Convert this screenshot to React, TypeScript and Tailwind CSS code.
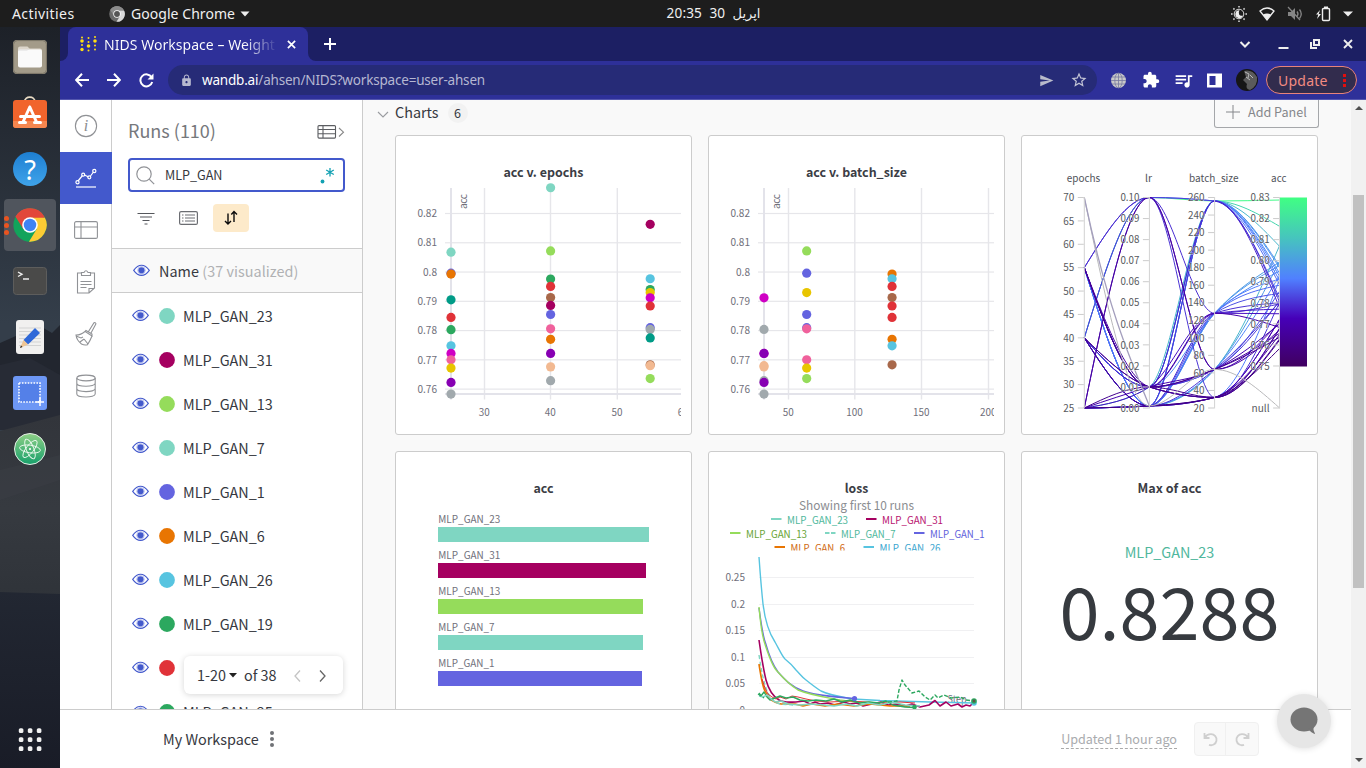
import React from "react";
import { MdLock, MdSend, MdStarBorder, MdExtension, MdQueueMusic } from "react-icons/md";

const C = {
  teal: "#7fd6c2", maroon: "#a50060", lime: "#95dc5b", blue: "#6464e0", orange: "#e87502",
  cyan: "#57c4e0", green: "#2ca85f", red: "#e03238", dteal: "#009b87", magenta: "#cf00c4",
  pink: "#f0619c", yellow: "#e8c500", purple: "#8700b3", gray: "#a1a9ad", brown: "#a8684a", peach: "#f2b991",
};

type Run = [string, number, number, number, number];

/* colour, epochs, batch size, accuracy, learning rate */
const RUNS: Run[] = [
  [C.teal, 25, 256, 0.8068, 0.01], [C.blue, 25, 64, 0.7996, 0.001], [C.orange, 25, 128, 0.7993, 0.001],
  [C.dteal, 25, 256, 0.7905, 0.001], [C.red, 25, 128, 0.7845, 0.001], [C.green, 25, 256, 0.7803, 0.001],
  [C.cyan, 25, 128, 0.7748, 0.01], [C.magenta, 25, 32, 0.7722, 0.001], [C.pink, 25, 64, 0.77, 0.01],
  [C.yellow, 25, 64, 0.7672, 0.1], [C.purple, 25, 32, 0.7623, 0.01], [C.gray, 25, 32, 0.7583, 0.001],
  [C.teal, 40, 256, 0.8288, 0.1], [C.lime, 40, 64, 0.8072, 0.001], [C.green, 40, 256, 0.7976, 0.01],
  [C.red, 40, 128, 0.7951, 0.01], [C.brown, 40, 128, 0.7913, 0.001], [C.maroon, 40, 256, 0.7886, 0.1],
  [C.blue, 40, 64, 0.7855, 0.01], [C.pink, 40, 64, 0.7806, 0.001], [C.orange, 40, 128, 0.777, 0.01],
  [C.purple, 40, 32, 0.7722, 0.001], [C.peach, 40, 32, 0.7676, 0.01], [C.gray, 40, 32, 0.7629, 0.01],
  [C.maroon, 55, 256, 0.8163, 0.01], [C.cyan, 55, 128, 0.7977, 0.001], [C.green, 55, 256, 0.794, 0.001],
  [C.yellow, 55, 64, 0.793, 0.001], [C.magenta, 55, 32, 0.7912, 0.001], [C.red, 55, 128, 0.7884, 0.001],
  [C.blue, 55, 64, 0.781, 0.01], [C.gray, 55, 32, 0.7804, 0.1], [C.dteal, 55, 256, 0.7775, 0.01],
  [C.brown, 55, 128, 0.7683, 0.01], [C.peach, 55, 32, 0.768, 0.01], [C.lime, 55, 64, 0.7636, 0.01],
];

function Eye() {
  return (
    <svg width="17" height="13" viewBox="0 0 17 13" className="-mt-[2px] shrink-0">
      <path d="M.7 6.3C3.2 2.8 5.7 1.2 8.5 1.2s5.3 1.6 7.8 5.1c-2.5 3.5-5 5.1-7.8 5.1S3.200 9.800.7 6.300z" fill="#fff" stroke="#4359cc" strokeWidth="1.15" />
      <circle cx="8.500" cy="6.300" r="3.800" fill="none" stroke="#8d9be2" strokeWidth=".6" />
      <circle cx="8.500" cy="6.300" r="3.100" fill="#4359cc" />
    </svg>
  );
}

function Card({ children }: { children: React.ReactNode }) {
  return <section className="h-[300px] w-[297px] overflow-hidden rounded-[3px] border border-[#ccc] bg-white">{children}</section>;
}

function T({ x, y, s = 10.2, a = "middle", f = "#70707b", len, w, children }: { x: number; y: number; s?: number; a?: "start" | "middle" | "end"; f?: string; len?: number; w?: number; children: React.ReactNode }) {
  return <text x={x} y={y} fontSize={s} textAnchor={a} fill={f} fontWeight={w} textLength={len} lengthAdjust="spacingAndGlyphs">{children}</text>;
}

function Scatter({ title, titleLen, ox, axis, axisMin, ticks, pick, px, clipX }: { title: string; titleLen: number; ox: number; axis: number; axisMin: number; ticks: [string, number][]; pick: 1 | 2; px: (v: number) => number; clipX: number }) {
  const y = (v: number) => 213.5 + (0.82 - v) * 2927;
  const id = "clip" + pick;
  return (
    <svg width="295" height="298" viewBox={`${ox} 136 295 298`}>
      <clipPath id={id}><rect x={ox} y="136" width={clipX - ox} height="298" /></clipPath>
      <T x={ox + 147.500} y={177} s={12.600} w={700} f="#3b3d45" len={titleLen}>{title}</T>
      <g clipPath={`url(#${id})`}>
        {[0.82, 0.81, 0.8, 0.79, 0.78, 0.77, 0.76].map((v) => (
          <g key={v}>
            <rect x={axisMin} y={y(v) - 0.6} width={clipX - axisMin} height="1.200" fill="#e6e6ea" />
            <T x={axis - 14} y={y(v) + 3.700} a="end" len={v === 0.8 ? 14 : 19.500}>{v}</T>
          </g>
        ))}
        {ticks.map(([l, tx]) => (
          <g key={l}>
            <rect x={tx - 0.7} y="188" width="1.400" height="211.500" fill="#e6e6ea" />
            <T x={tx - 0.2} y={416} len={l.length * 5.500}>{l}</T>
          </g>
        ))}
        <rect x={axis - 1} y="188" width="2" height="211.500" fill="#e3e3ea" />
        <rect x={axisMin} y="393" width={clipX - axisMin} height="2" fill="#e3e3ea" />
        <text transform={`translate(${axis + 16} 209) rotate(-90)`} fontSize="10.200" fill="#70707b" textLength="15">acc</text>
        {RUNS.filter((r) => pick === 1 || r[2] < 200).sort((p, q) => q[3] - p[3]).map((r, i) => (
          <circle key={i} cx={px(r[pick])} cy={y(r[3])} r="4.600" fill={r[0]} />
        ))}
      </g>
    </svg>
  );
}

function lerpColor(t: number) {
  const stops: [number, number[]][] = [[0, [64, 255, 131]], [0.24, [70, 196, 190]], [0.48, [80, 128, 255]], [0.715, [70, 0, 184]], [1, [64, 0, 96]]];
  for (let i = 1; i < stops.length; i++) {
    if (t <= stops[i][0]) {
      const [a, ca] = stops[i - 1];
      const [b, cb] = stops[i];
      const k = (t - a) / (b - a);
      return `rgb(${ca.map((c, j) => Math.round(c + (cb[j] - c) * k)).join(",")})`;
    }
  }
  return "rgb(64,0,96)";
}

function monotone(xs: number[], ys: number[]) {
  const n = xs.length;
  const h = xs.slice(1).map((x, i) => x - xs[i]);
  const d = h.map((w, i) => (ys[i + 1] - ys[i]) / w);
  const m = ys.map((_, i) => {
    if (i === 0 || i === n - 1) return 0;
    const p = (d[i - 1] * h[i] + d[i] * h[i - 1]) / (h[i - 1] + h[i]);
    return (Math.sign(d[i - 1]) + Math.sign(d[i])) * Math.min(Math.abs(d[i - 1]), Math.abs(d[i]), 0.5 * Math.abs(p));
  });
  m[0] = (3 * d[0] - m[1]) / 2;
  m[n - 1] = (3 * d[n - 2] - m[n - 2]) / 2;
  let p = `M${xs[0]} ${ys[0]}`;
  for (let i = 0; i < n - 1; i++) {
    const k = h[i] / 3;
    p += `C${xs[i] + k} ${ys[i] + m[i] * k} ${xs[i + 1] - k} ${ys[i + 1] - m[i + 1] * k} ${xs[i + 1]} ${ys[i + 1]}`;
  }
  return p;
}

function Parallel() {
  const xs = [1084.3, 1149.4, 1214.6, 1279.6];
  const ye = (v: number) => 408 - ((v - 25) / 45) * 210.5;
  const yl = (v: number) => 408 - v * 2105;
  const yb = (v: number) => 408 - ((v - 20) / 240) * 210.5;
  const ya = (v: number) => 197.5 + (0.83 - v) * 2106;
  const axes: { t: string; x: number; len: number; ticks: [string, number][] }[] = [
    { t: "epochs", x: xs[0], len: 33.5, ticks: Array.from({ length: 10 }, (_, i) => [String(25 + 5 * i), ye(25 + 5 * i)]) },
    { t: "lr", x: xs[1], len: 7, ticks: Array.from({ length: 11 }, (_, i) => [(i / 100).toFixed(2), yl(i / 100)]) },
    { t: "batch_size", x: xs[2], len: 49.500, ticks: Array.from({ length: 13 }, (_, i) => [String(20 + 20 * i), yb(20 + 20 * i)]) },
    { t: "acc", x: xs[3], len: 15.500, ticks: [...Array.from({ length: 9 }, (_, i): [string, number] => [(0.75 + i / 100).toFixed(2), ya(0.75 + i / 100)]), ["null", 408]] },
  ];
  const extra: Run[] = [
    ["", 55, 128, 0.7795, 0.1], ["", 40, 256, 0.782, 0.1], ["", 25, 64, 0.771, 0.1], ["", 25, 128, 0.78, 0.001],
    ["", 40, 256, 0.7925, 0.01], ["", 55, 256, 0.7966, 0.001], ["", 40, 32, 0.765, 0.001], ["", 55, 64, 0.7655, 0.01],
  ];
  return (
    <svg width="295" height="298" viewBox="1022 136 295 298">
      <defs>
        <linearGradient id="accScale" x1="0" y1="0" x2="0" y2="1">
          <stop offset="0" stopColor="#40ff83" /><stop offset=".24" stopColor="#46c4be" /><stop offset=".48" stopColor="#5080ff" />
          <stop offset=".715" stopColor="#4600b8" /><stop offset="1" stopColor="#400060" />
        </linearGradient>
      </defs>
      <g fill="none" strokeWidth="1">
        {[...extra, ...RUNS].sort((p, q) => q[3] - p[3]).map((r, i) => (
          <path key={i} d={monotone(xs, [ye(r[1]), yl(r[4]), yb(r[2]), ya(r[3])])} stroke={lerpColor((0.83 - r[3]) / 0.08)} />
        ))}
        <path d={monotone(xs, [ye(70), yl(0.001), yb(64), 408])} stroke="#b9b9bb" strokeWidth="1" />
        <path d={monotone(xs.slice(0, 2), [ye(70), yl(0.001)])} stroke="#a49fbd" strokeWidth="1.300" />
      </g>
      {axes.map((a) => (
        <g key={a.t}>
          <rect x={a.x - 0.5} y="197" width="1" height="211.500" fill="#d2d2d2" />
          <T x={a.x - 0.8} y={182} s={10.300} f="#51535a" len={a.len}>{a.t}</T>
          {a.ticks.map(([l, y]) => (
            <g key={l}>
              <rect x={a.x - 6.500} y={y - 0.5} width="6" height="1" fill="#ccc" />
              <text x={a.x - 10} y={y + 3.700} textAnchor="end" fontSize="10.200" fill="#585a60" textLength={l === "null" ? 18 : l.includes(".") ? 19 : l.length * 5.500} lengthAdjust="spacingAndGlyphs" stroke="#fff" strokeWidth=".8" strokeOpacity=".7" paintOrder="stroke">{l}</text>
            </g>
          ))}
        </g>
      ))}
      <rect x="1280" y="197.500" width="27" height="169" fill="url(#accScale)" />
    </svg>
  );
}

const BARS: [string, string, number][] = [
  ["MLP_GAN_23", C.teal, 211], ["MLP_GAN_31", C.maroon, 208], ["MLP_GAN_13", C.lime, 205], ["MLP_GAN_7", C.teal, 205], ["MLP_GAN_1", C.blue, 204],
];

function Bars() {
  return (
    <svg width="295" height="298" viewBox="396 452 295 298">
      <T x={543.500} y={493} s={12.600} w={700} f="#3b3d45" len={20}>acc</T>
      {BARS.map(([n, c, w], i) => (
        <g key={n}>
          <T x={438.300} y={523 + i * 36} a="start" s={10.200} len={n.length * 5.900 + 3}>{n}</T>
          <rect x="438" y={527 + i * 36} width={w} height="15" fill={c} />
        </g>
      ))}
    </svg>
  );
}

const LEGEND: [string, number, number, string, string, boolean][] = [
  ["MLP_GAN_23", 771, 524, C.teal, "#4fb89c", false], ["MLP_GAN_31", 866, 524, C.maroon, "#b8126f", false],
  ["MLP_GAN_13", 730, 538, C.lime, "#68a436", false], ["MLP_GAN_7", 825, 538, C.teal, "#4fb89c", true], ["MLP_GAN_1", 914, 538, C.blue, "#5f5fdc", false],
  ["MLP_GAN_6", 774.5, 552, C.orange, "#cf6810", false], ["MLP_GAN_26", 863.500, 552, C.cyan, "#39a5cf", false],
];

function Loss() {
  return (
    <svg width="295" height="298" viewBox="709 452 295 298">
      <clipPath id="legendClip"><rect x="709" y="452" width="295" height="98.500" /></clipPath>
      <T x={856.500} y={493} s={12.600} w={700} f="#3b3d45" len={23.500}>loss</T>
      <T x={856.500} y={510} s={12.400} f="#8b8d91" len={115}>Showing first 10 runs</T>
      <g clipPath="url(#legendClip)">
        {LEGEND.map(([n, x, y, c, tc, dash]) => (
          <g key={n}>
            <path d={`M${x} ${y - 5}h10.500`} stroke={c} strokeWidth="2" strokeDasharray={dash ? "4.500 1.500" : undefined} />
            <T x={x + 16} y={y} a="start" s={10.200} f={tc} len={n.length === 10 ? 61 : 54.500}>{n}</T>
          </g>
        ))}
      </g>
      {([["0.25", 577.500], ["0.2", 604.500], ["0.15", 630.500], ["0.1", 657.500], ["0.05", 683.500], ["0", 710.500]] as [string, number][]).map(([l, y]) => (
        <g key={l}>
          <path d={`M759 ${y}H974`} stroke="#f0f0f2" />
          <T x={745} y={y + 3.500} a="end" len={l.length === 4 ? 19.500 : l.length === 3 ? 14 : 5.500}>{l}</T>
        </g>
      ))}
      <T x={957} y={703} s={10.200} len={19}>Step</T>
      <g fill="none" strokeWidth="1.400" strokeLinejoin="round">
        <path d="M759 557C760 571 761.500 590 763 604C765 620 769 633 775 642C779 649 782 656 785 659C790 663 793 666 796 670C800 674 802 677 806 680C811 684 816 688 821 691C829 695 840 697 853 699L880 700.500L930 702L974 703" stroke={C.cyan} />
        <path d="M759 608C761 623 763 637 765.500 643C768 652 772 664 778 672C786 681 792 687 803 691C817 696 838 697 854 698.500" stroke={C.blue} />
        <path d="M759 607C760.500 624 762 634 764 641C768 654 772 666 777 671C784 679 790 685 798 690C810 695 824 697 840 700L855 702L880 703" stroke={C.lime} />
        <path d="M759 640C761 654 763 668 766 680C769 691 774 697 779 700C784 703 790 702 796 702L804 701L810 704L815 702L820 704L828 703L835 705L844 702L850 704L857 703L863 706L872 704L881 702L888 705L897 704L906 706L912 704L920 707L929 705L935 700.500L940 706L946 702L951 706L958 704L962 707L966 705L970 706L974 702" stroke={C.maroon} strokeWidth="1.600" />
        <path d="M759 664C761 676 762 685 765 691C768 698 774 703 781 704L795 704L803 706L812 704L825 706L838 704L854 706L870 704L890 706L910 706" stroke={C.orange} strokeWidth="1.700" />
        <path d="M759 655C761 668 763 679 766 688C769 697 773 702 780 704L794 705" stroke={C.teal} strokeDasharray="4 2.500" />
        <path d="M762 679L765 688L768 694L772 697L776 699L780 697L786 699L792 696L798 697L806 699L816 701L830 702L850 701L880 703L900 702L915 703" stroke={C.red} strokeWidth="1" />
        <path d="M759 693L761 696L764 692L767 697L770 700L775 698L780 696L786 698L793 697L800 700L808 701L816 700L826 701L834 699L842 702L850 700L860 703L869 702L879 703L886 701L893 705L905 707L914 707.500" stroke={C.green} />
        <path d="M759 696L763 697L767 695L771 699L775 702L781 701L788 704L800 705L811 704L824 705L834 706L846 704L857 706L868 703L880 705L892 702L905 705L920 706" stroke={C.teal} />
        <path d="M758 694L764 698M888 702L893 701.500L897 701L899 690L902 680L905 685L912 693L919 691L925 697L930 700L935 695L938 698L944 695L951 698L960 697L966 700L974 701" stroke={C.green} strokeDasharray="4 1.800" />
      </g>
      <circle cx="854.500" cy="698.500" r="2.600" fill={C.blue} />
      <circle cx="974" cy="703" r="2.800" fill={C.cyan} />
      <circle cx="974" cy="701" r="2.800" fill={C.green} />
      <circle cx="914.500" cy="707" r="2.300" fill={C.green} />
      <circle cx="974" cy="701" r="1.400" fill="#5d5348" />
    </svg>
  );
}

function ChromeLogo({ s, gray = false }: { s: number; gray?: boolean }) {
  const k = gray ? ["#8b8b8b", "#6a6a6a", "#d8d8d8", "#555"] : ["#e2473a", "#12a35b", "#fccb34", "#3f83f5"];
  return (
    <svg width={s} height={s} viewBox="0 0 48 48">
      <circle cx="24" cy="24" r="23.500" fill={k[1]} />
      <path d="M24 24L3.600 12.300A23.500 23.500 0 0 1 44.400 12.300z" fill={k[0]} />
      <path d="M44.400 12.300A23.500 23.500 0 0 1 22.500 47.500L33.500 29.500L24 13.500H45z" fill={k[2]} />
      <path d="M3.600 12.300L14.500 29.500L24 24L24 13.500H45L40 7A23.500 23.500 0 0 0 3.600 12.300z" fill={k[0]} />
      <circle cx="24" cy="24" r="11" fill="#fff" /><circle cx="24" cy="24" r="8.800" fill={k[3]} />
    </svg>
  );
}

function Dock() {
  const cell = "flex h-14 items-center justify-center";
  return (
    <aside className="relative w-[60px] shrink-0 overflow-hidden bg-[#22262f]">
      <svg className="absolute inset-0" width="60" height="741" viewBox="0 27 60 741">
        <defs>
          <linearGradient id="sky" x1="0" y1="0" x2="0" y2="1"><stop offset="0" stopColor="#1d2128" /><stop offset=".4" stopColor="#343e4a" /></linearGradient>
          <linearGradient id="hill" x1="0" y1="0" x2="0" y2="1"><stop offset="0" stopColor="#32353b" /><stop offset=".5" stopColor="#363a40" /><stop offset="1" stopColor="#2f3339" /></linearGradient>
          <linearGradient id="ground" x1="0" y1="0" x2="0" y2="1"><stop offset="0" stopColor="#222732" /><stop offset="1" stopColor="#191c27" /></linearGradient>
        </defs>
        <rect y="27" width="60" height="741" fill="url(#sky)" />
        <path d="M0 343L25 332L40 326L52 333L60 325V430H0z" fill="#22262f" />
        <path d="M0 365L30 358L60 375V430H0z" fill="#272b35" />
        <path d="M0 431L60 415V600H0z" fill="url(#hill)" />
        <path d="M0 470L60 455V480L0 500z" fill="#3a3e45" opacity=".6" />
        <path d="M0 592L60 594V768H0z" fill="url(#ground)" />
      </svg>
      <div className="relative flex h-full flex-col pt-[2px]">
        <div className={cell}>
          <svg width="34" height="34" viewBox="0 0 34 34"><rect width="34" height="34" rx="4" fill="#a39b89" /><rect x=".6" y=".6" width="32.800" height="32.800" rx="3.600" fill="none" stroke="#7b7567" /><path d="M5 8.500q0-2 2-2h7q1 0 1.500 1l.6 1.100H27q2 0 2 2V13H5z" fill="#dcd6cb" /><rect x="5" y="9.500" width="24" height="18" rx="2" fill="#fafafa" /><path d="M5 10h9.500l1.500-1.500" stroke="#ddd" fill="none" /></svg>
        </div>
        <div className={cell}>
          <svg width="34" height="34" viewBox="0 0 34 34"><path d="M11.500 6C11.500-.5 22-.5 22 6" fill="none" stroke="#e8dbc4" strokeWidth="1.800" /><rect y="4" width="34" height="28" rx="3" fill="#f1642c" /><path d="M0 25h34v4q0 3-3 3H3q-3 0-3-3z" fill="#f5864f" /><path d="M16.800 11L10 26M16.800 11L23.500 26M7.500 20.500H26.500M6.500 26.500h6M21.500 26.500h6" stroke="#fff" strokeWidth="3" strokeLinecap="round" fill="none" /></svg>
        </div>
        <div className={cell}>
          <div className="flex size-[34px] items-center justify-center rounded-full bg-linear-to-b from-[#1d7fd2] to-[#3fa3ea] font-['Noto_Sans'] text-[27px] leading-none text-white">?</div>
        </div>
        <div className={cell}>
          <div className="relative flex size-[52px] items-center justify-center rounded bg-[#50555d]">
            <div className="absolute left-0 flex flex-col gap-[2px]"><i className="size-[5px] rounded-full bg-[#e95420]" /><i className="size-[5px] rounded-full bg-[#e95420]" /><i className="size-[5px] rounded-full bg-[#e95420]" /></div>
            <ChromeLogo s={34} />
          </div>
        </div>
        <div className={cell}>
          <svg width="34" height="28" viewBox="0 0 34 28"><rect x=".5" y=".5" width="33" height="27" rx="3" fill="#4a4a49" stroke="#5d5d5c" /><path d="M5 5l4 2.300L5 9.500M10 12h6" stroke="#eee" strokeWidth="1.400" fill="none" /></svg>
        </div>
        <div className={cell}>
          <svg width="30" height="34" viewBox="0 0 30 34"><rect x="1" width="28" height="34" rx="3" fill="#f1f0ef" /><path d="M4 8h22M4 11.500h22M4 15h22M4 18.500h22M4 22h22M4 25.500h22" stroke="#d3d3d3" /><path d="M8.500 20L20 8l5 5L13 24.500z" fill="#2f68d8" /><path d="M8.500 20l4.500 4.500L5 28z" fill="#efc594" /><path d="M5 28l1-2.500 1.500 1.500z" fill="#222" /></svg>
        </div>
        <div className={cell}>
          <svg width="34" height="34" viewBox="0 0 34 34"><rect width="34" height="34" rx="3" fill="#6d97f5" /><rect x="6" y="7" width="21" height="19" fill="#5480e8" stroke="#fff" strokeWidth="1.600" strokeDasharray="1.600 1.300" /><path d="M27 22v8M23 26h8" stroke="#fff" strokeWidth="1.500" /></svg>
        </div>
        <div className={cell}>
          <svg width="34" height="34" viewBox="0 0 34 34"><defs><linearGradient id="atom" x1="0" y1="0" x2="0" y2="1"><stop stopColor="#8fd086" /><stop offset="1" stopColor="#17a06b" /></linearGradient></defs><circle cx="17" cy="17" r="15.500" fill="url(#atom)" stroke="#e6efe7" /><g fill="none" stroke="#eefaf0" strokeWidth=".9"><ellipse cx="17" cy="17" rx="10.500" ry="3.800" transform="rotate(8 17 17)" /><ellipse cx="17" cy="17" rx="10.500" ry="3.800" transform="rotate(68 17 17)" /><ellipse cx="17" cy="17" rx="10.500" ry="3.800" transform="rotate(128 17 17)" /></g><circle cx="17" cy="17" r="1.100" fill="#fff" /></svg>
        </div>
        <div className="mt-auto flex h-14 items-center justify-center">
          <svg width="24" height="24" viewBox="0 0 24 24" fill="#f2f2f2">{[0, 1, 2].map((r) => [0, 1, 2].map((c) => <rect key={`${r}${c}`} x={.8 + c * 9} y={.3 + r * 9} width="4.600" height="4.600" rx="1.500" />))}</svg>
        </div>
      </div>
    </aside>
  );
}

function TopBar() {
  return (
    <header className="grid h-[27px] shrink-0 grid-cols-3 items-center bg-[#1d1d1d] font-['Noto_Sans'] text-[14px] text-[#f0f0f0]">
      <div className="flex items-center">
        <span className="w-[97px] pl-3 tracking-[.42px]">Activities</span>
        <span className="flex w-[34px] pl-[12px]"><ChromeLogo s={16} gray /></span>
        <span className="w-[109px] whitespace-nowrap text-[14px] tracking-[.05px]">Google Chrome</span>
        <svg width="10" height="6"><path d="M.5.500h9L5 5.500z" fill="#eee" /></svg>
      </div>
      <div className="flex items-center justify-center pl-[61px]">
        <span className="w-[43px] text-[13.600px] tracking-[.15px]">20:35</span>
        <span className="w-[23px] text-[13.600px]">30</span>
        <span className="font-['DejaVu_Sans'] text-[13px]" dir="rtl">اپریل</span>
      </div>
      <div className="flex items-center justify-end pr-[14px]">
        <svg width="112" height="18" viewBox="0 0 112 18">
          <circle cx="8" cy="9" r="4.800" fill="none" stroke="#ddd" strokeWidth="1" /><path d="M8.500 5.200a4 4 0 1 0 3.600 5.400q-2.800.9-4-1.200-1-2.200.4-4.200z" fill="#eee" />
          <path d="M8 1v1.600M8 15.400V17M0 9h1.600M14.400 9H16M2.400 3.400l1.100 1.100M12.500 13.500l1.100 1.100M2.400 14.600l1.100-1.100M12.500 4.500l1.100-1.100" stroke="#ddd" strokeWidth="1.500" />
          <path d="M29 6q7-6 14 0l-7 9z" fill="none" stroke="#eee" strokeWidth="1.300" /><path d="M32 9.500q4-2 8 0L36 15z" fill="#eee" />
          <g stroke="#858585" fill="#858585"><path d="M57 7h3l4-4v12l-4-4h-3z" stroke="none" /><path d="M66 6.500q2 2.500 0 5M68.500 4.500q3.500 4.500 0 9" fill="none" strokeWidth="1.300" /><path d="M57 2l12 13" strokeWidth="1.200" /></g>
          <path d="M89 5l-4 4.500h2.300L86 14l4-5h-2.300z" fill="#eee" /><rect x="91.500" y="3.500" width="7" height="12" rx="1" fill="none" stroke="#eee" strokeWidth="1.400" /><rect x="93" y="1.500" width="4" height="2" fill="#eee" />
        </svg>
        <svg width="10" height="6" className="-mr-[1px]"><path d="M0 .5h10L5 5.500z" fill="#eee" /></svg>
      </div>
    </header>
  );
}

function Cross({ size, color }: { size: number; color: string }) {
  return <svg width={size} height={size} viewBox="0 0 10 10" className="shrink-0"><path d="M1 1l8 8M9 1L1 9" stroke={color} strokeWidth="1.900" /></svg>;
}

function BrowserChrome() {
  return (
    <div className="shrink-0 bg-[#2e3099] font-['Noto_Sans'] text-white">
      <div className="flex h-[34px] items-start bg-[#1c1f63]">
        <div className="flex h-[34px] w-2 items-end bg-[#2e3099]"><i className="h-full w-full rounded-br-lg bg-[#1c1f63]" /></div>
        <div className="flex h-[34px] w-[240px] items-center rounded-t-lg bg-[#2e3099] pl-3 pr-[12px]">
          <svg width="17" height="16" viewBox="0 0 17 16" fill="#ffdf12"><circle cx="2" cy="1.500" r="1" /><circle cx="2" cy="5" r="1.800" /><circle cx="2" cy="9" r="1" /><circle cx="2" cy="13.500" r="1.700" /><circle cx="8.500" cy="2" r="1" /><circle cx="8.500" cy="6" r="1" /><circle cx="8.500" cy="10" r="1.800" /><circle cx="8.500" cy="14.500" r="1" /><circle cx="15" cy="1" r="1" /><circle cx="15" cy="5" r="1.800" /><circle cx="15" cy="9.500" r="1" /><circle cx="15" cy="13.500" r="1" /></svg>
          <span className="ml-[7px] w-[174px] overflow-hidden bg-linear-to-r from-white from-80% to-transparent bg-clip-text whitespace-nowrap text-[14px] tracking-[.04px] text-transparent">NIDS Workspace – Weight</span>
          <span className="ml-auto flex"><Cross size={9} color="#fff" /></span>
        </div>
        <div className="h-[34px] w-2 bg-[#2e3099]"><div className="h-full w-full rounded-bl-lg bg-[#1c1f63]" /></div>
        <svg className="ml-2 mt-[11px]" width="12" height="12"><path d="M6 0v12M0 6h12" stroke="#fff" strokeWidth="2" /></svg>
        <div className="ml-auto mt-[10px] flex items-center pr-[13px]">
          <svg width="12" height="14"><path d="M1.500 5l4.500 4.500L10.500 5" fill="none" stroke="#eee" strokeWidth="2" /></svg>
          <svg className="ml-[27px]" width="11" height="14"><path d="M.5 11h10" stroke="#eee" strokeWidth="2" /></svg>
          <svg className="ml-[21px]" width="12" height="14"><rect x="4" y="3" width="5" height="5" fill="none" stroke="#eee" strokeWidth="2" /><path d="M1 5v6h6" fill="none" stroke="#eee" strokeWidth="2" /></svg>
          <span className="ml-[21px] flex"><Cross size={10} color="#eee" /></span>
        </div>
      </div>
      <div className="flex h-[39px] items-center border-b border-[#5557ae] pl-[15px] pr-[8px]">
        <svg width="14" height="14" viewBox="0 0 14 14" fill="none" stroke="#fff" strokeWidth="2"><path d="M14 7H1.500M7 .8L1.200 7L7 13.200" /></svg>
        <svg className="ml-[18px]" width="14" height="14" viewBox="0 0 14 14" fill="none" stroke="#fff" strokeWidth="2"><path d="M0 7h12.500M7 .8L12.800 7L7 13.200" /></svg>
        <svg className="ml-[18px]" width="15" height="15" viewBox="0 0 15 15"><path d="M12.600 4.300A6 6 0 1 0 13.200 9" fill="none" stroke="#fff" strokeWidth="2" /><path d="M14.500.500v6h-6z" fill="#fff" /></svg>
        <div className="ml-[14px] flex h-[30px] w-[929px] items-center rounded-full bg-[#262b77] pl-3 pr-[9px]">
          <MdLock className="size-[13px] text-[#b7b9cf]" />
          <span className="ml-[9px] text-[13.500px] tracking-[-.19px] text-[#b5b7d2]"><span className="text-white">wandb.ai</span>/ahsen/NIDS?workspace=user-ahsen</span>
          <MdSend className="ml-auto size-[15px] text-[#b9bbcb]" /><MdStarBorder className="ml-[16px] size-[18px] text-[#c3c5d6]" />
        </div>
        <svg className="ml-[13px]" width="17" height="17" viewBox="0 0 17 17"><circle cx="8.500" cy="8.500" r="7.500" fill="#c9c9c9" /><g fill="none" stroke="#777aa0" strokeWidth=".8"><ellipse cx="8.500" cy="8.500" rx="3.700" ry="7.500" /><path d="M1 8.500h15M8.500 1v15M2 5h13M2 12h13" /></g></svg>
        <MdExtension className="ml-[15px] size-[18px]" />
        <MdQueueMusic className="ml-[13px] size-[21px]" />
        <svg className="ml-[13px]" width="15" height="15"><path d="M0 .5h15v14H0zM2.500 3v9h6V3z" fill="#fff" fillRule="evenodd" /></svg>
        <svg className="ml-[14px]" width="22" height="22" viewBox="0 0 22 22"><circle cx="11" cy="11" r="11" fill="#161616" /><path d="M8 2q8-2 13 6q1 9-7 13q-5-1-3-6l-4-4 3-3z" fill="#5b5b5b" /><path d="M9 3l4 2-1 4M10 8l4 3M14 6l3 3" stroke="#b9b9b9" fill="none" /></svg>
        <div className="ml-[8px] flex h-7 w-[91px] items-center justify-between rounded-full border border-[#e8837a] bg-[#322c4d] pl-[11px] pr-[10px] text-[14px] text-[#f28b82]"><span className="tracking-[.25px]">Update</span>
          <div className="flex flex-col gap-[2px]"><i className="size-[3px] bg-[#e00f0f]" /><i className="size-[3px] bg-[#e00f0f]" /><i className="size-[3px] bg-[#e00f0f]" /></div>
        </div>
      </div>
    </div>
  );
}

function Nav() {
  const cell = "flex h-[52px] w-[52px] items-center justify-center";
  const s = { fill: "none", stroke: "#909296", strokeWidth: 1.1 } as const;
  return (
    <nav className="flex w-[52px] shrink-0 flex-col border-r border-[#ccc]">
      <div className={cell}><svg width="24" height="24" viewBox="0 0 24 24"><circle cx="12" cy="12" r="10.600" {...s} /><text x="12" y="17" textAnchor="middle" fontSize="16" fontStyle="italic" fill="#8a8c90" className="font-['Liberation_Serif']">i</text></svg></div>
      <div className={cell + " bg-[#4359cc]"}><svg width="22" height="20" viewBox="0 0 22 20" fill="none" stroke="#fff" strokeWidth="1.200"><path d="M3 13L7.500 7.500M9.500 7l4 2M15.500 8L18.500 4" /><circle cx="2.500" cy="14.300" r="1.600" /><circle cx="8.200" cy="6.700" r="1.500" /><circle cx="14.300" cy="9.300" r="1.500" /><circle cx="19.300" cy="3" r="1.600" /><path d="M1 19h20" /></svg></div>
      <div className={cell}><svg width="24" height="18" viewBox="0 0 24 18" {...s}><rect x=".6" y=".6" width="22.800" height="16.800" rx="1.500" /><path d="M.6 6h22.800M7 .6V17.400" /></svg></div>
      <div className={cell}><svg width="20" height="24" viewBox="0 0 20 24" {...s}><path d="M5.500 3H1.500v20h11.500l5.500-5V3h-4M13 23v-4.500h5.500" /><path d="M5.500 5.500v-3h2.500q2-3.500 4 0h2.500v3zM4.500 11.500h11M4.500 14.500h11M4.500 17.500h6" /></svg></div>
      <div className={cell}><svg width="22" height="24" viewBox="0 0 22 24" {...s}><path d="M13.500 9.500L19 .800q1.500-.5 2 1L16 11M11 8.500l6 3.500v2l-7-4.500zM10 9.500Q6 13 1 13q.5 5 5.500 9 3 1.500 6 .7Q15 19 17 14M1 14l5 2 2-1M5 20l4-3M13 22l-4-5" /></svg></div>
      <div className={cell}><svg width="20" height="24" viewBox="0 0 20 24" {...s}><ellipse cx="10" cy="4" rx="9.200" ry="2.900" /><path d="M.8 4v16c0 4 18.400 4 18.400 0V4M.8 9.300c0 4 18.400 4 18.400 0M.8 14.600c0 4 18.400 4 18.400 0" /></svg></div>
    </nav>
  );
}

const LIST: [string, string][] = [
  ["MLP_GAN_23", C.teal], ["MLP_GAN_31", C.maroon], ["MLP_GAN_13", C.lime], ["MLP_GAN_7", C.teal], ["MLP_GAN_1", C.blue],
  ["MLP_GAN_6", C.orange], ["MLP_GAN_26", C.cyan], ["MLP_GAN_19", C.green], ["", C.red], ["MLP_GAN_25", C.green],
];

function Sidebar() {
  return (
    <div className="relative flex w-[251px] shrink-0 flex-col overflow-hidden border-r border-[#ccc]">
      <div className="flex h-[58px] shrink-0 items-center justify-between pl-4 pr-[17px] pt-[5px] text-[18px] leading-none text-[#76787c]">
        <span className="-mt-[3px]">Runs (110)</span>
        <svg width="28" height="14" viewBox="0 0 28 14" fill="none" stroke="#5b5d61" strokeWidth="1.100"><rect x="1" y=".6" width="17.500" height="12.500" rx="1" /><path d="M1 4.500h17.500M1 8.800h17.500M6 .6v12.500" /><path d="M22 3l4.500 4.200L22 11.500" stroke="#888" /></svg>
      </div>
      <div className="ml-4 flex h-[34px] w-[217px] shrink-0 items-center rounded border-2 border-[#4359cc] pl-[6px]">
        <svg width="19" height="19" viewBox="0 0 19 19" fill="none" stroke="#909297" strokeWidth="1.200"><circle cx="8" cy="8" r="7.200" /><path d="M13.200 13.200l5 5" /></svg>
        <span className="ml-[10px] text-[12.600px] leading-none text-[#36383d]">MLP_GAN</span>
        <svg className="ml-auto mr-[8px]" width="15" height="17" viewBox="0 0 15 17"><circle cx="2.500" cy="14.500" r="1.900" fill="#13a1b3" /><path d="M10 1v8.500M6.200 3l7.600 4.500M13.800 3L6.200 7.500" stroke="#13a1b3" strokeWidth="1.300" /></svg>
      </div>
      <div className="flex h-[56px] shrink-0 items-center pb-[4px] pl-[25px]">
        <svg width="18" height="13" viewBox="0 0 18 13" stroke="#55575c" strokeWidth="1.200"><path d="M.5 1.500h17M3 5h12M5.500 8.500h7M7.500 12h3" /></svg>
        <svg className="ml-[24px]" width="19" height="14" viewBox="0 0 19 14" fill="none" stroke="#6b6d72"><rect x=".6" y=".6" width="17.800" height="12.800" rx="1.500" strokeWidth="1.200" /><path d="M3 4h1.500M3 7h1.500M3 10h1.500M6 4h10M6 7h10M6 10h10" /></svg>
        <span className="ml-[15px] flex h-7 w-9 items-center justify-center rounded bg-[#fdeaca]"><svg width="14" height="16" viewBox="0 0 14 16" fill="none" stroke="#0b0b0b" strokeWidth="1.400"><path d="M4 3.500V14M1 11l3 3 3-3M10 12V1.500M7.300 4.500L10 1.500l3 3" /></svg></span>
      </div>
      <div className="flex h-[45px] shrink-0 items-center border-y border-[#ccc] bg-[#f9f9f9] pl-[21px] pt-px text-[14.400px] leading-none text-[#b0b1b3]"><Eye /><span className="ml-[9px] tracking-[.04px]"><span className="text-[#363840]">Name</span> (37 visualized)</span></div>
      <div className="flex flex-col pt-px">
        {LIST.map(([n, c]) => (
          <div key={c + n} className="flex h-11 shrink-0 items-center pl-[20px]">
            <Eye />
            <svg className="ml-[10px] shrink-0" width="16" height="16"><circle cx="8" cy="8" r="7.900" fill={c} /></svg>
            <span className="ml-2 text-[14.400px] leading-none text-[#363840]">{n}</span>
          </div>
        ))}
      </div>
      <div className="absolute left-[72px] top-[556px] flex h-[38px] w-[159px] items-center rounded-md bg-white pl-[13px] text-[14.400px] leading-none text-[#363840] shadow-[0_1px_6px_rgba(0,0,0,.16)]">
        <span>1-20</span><svg className="ml-[3px]" width="8" height="5"><path d="M0 0h8L4 4.500z" fill="#222" /></svg><span className="ml-[7px] whitespace-nowrap">of 38</span>
        <svg className="ml-[17px] mt-[2px]" width="34" height="12" viewBox="0 0 34 12" fill="none" strokeWidth="1.300"><path d="M6 .500L1 6l5 5.500" stroke="#c4c4c4" /><path d="M26 .500L31 6l-5 5.500" stroke="#666" /></svg>
      </div>
    </div>
  );
}

export default function App() {
  return (
    <div className="flex h-[768px] w-[1366px] flex-col overflow-hidden bg-white font-['Noto_Sans_CJK_SC',sans-serif]">
      <TopBar />
      <div className="flex min-h-0 flex-1">
        <Dock />
        <div className="flex min-w-0 flex-1 flex-col">
          <BrowserChrome />
          <div className="flex min-h-0 flex-1">
            <div className="relative flex min-w-0 flex-1 flex-col">
              <div className="flex min-h-0 flex-1 overflow-hidden">
                <Nav />
                <Sidebar />
                <main className="flex min-w-0 flex-1 flex-col overflow-hidden bg-[#f9f9f9]">
                  <div className="flex h-[35px] shrink-0 items-start pl-[14px] pr-8">
                    <svg className="mt-[11px]" width="12" height="8" fill="none"><path d="M1 1l5 5 5-5" stroke="#9a9ca0" strokeWidth="1.100" /></svg>
                    <span className="ml-[6px] mt-[4px] text-[14.400px] leading-[16px] text-[#363840]">Charts</span>
                    <span className="ml-[9px] mt-[3px] flex size-[20px] items-center justify-center rounded-full bg-[#f2f2f2] text-[12.600px] leading-none text-[#363840]">6</span>
                    <span className="ml-auto flex h-[28px] w-[105px] items-center rounded-b-[3px] border border-t-0 border-[#a5a7aa] pb-[3px] pl-[11px] text-[12.600px] leading-none text-[#85878b]"><svg width="14" height="14" className="mr-[8px] shrink-0"><path d="M7 0v14M0 7h14" stroke="#85878b" /></svg><span className="whitespace-nowrap">Add Panel</span></span>
                  </div>
                  <div className="grid grid-cols-[297px_297px_297px] gap-4 pl-8">
                    <Card><Scatter title="acc v. epochs" titleLen={80} ox={396} axis={451} axisMin={445} pick={1} px={(v) => 451 + ((v - 25) / 15) * 99.600} clipX={681} ticks={[["30", 484.500], ["40", 550.500], ["50", 617.300], ["60", 683.500]]} /></Card>
                    <Card><Scatter title="acc v. batch_size" titleLen={101} ox={709} axis={764} axisMin={758} pick={2} px={(v) => 764 + (v - 32) * 1.334} clipX={994} ticks={[["50", 788.500], ["100", 854.800], ["150", 921.500], ["200", 988.500]]} /></Card>
                    <Card><Parallel /></Card>
                    <Card><Bars /></Card>
                    <Card><Loss /></Card>
                    <Card>
                      <div className="flex flex-col items-center">
                        <h3 className="mt-[29px] text-[12.600px] leading-[14px] font-bold text-[#3b3d45]">Max of acc</h3>
                        <p className="mt-[48px] text-[14.400px] leading-[18px] text-[#50b79d]">MLP_GAN_23</p>
                        <p className="mt-[20px] text-[72px] leading-[56px] text-[#363a3f]">0.8288</p>
                      </div>
                    </Card>
                  </div>
                </main>
              </div>
              <footer className="flex h-[59px] shrink-0 items-center border-t border-[#ccc] bg-white pl-[103px]">
                <span className="text-[14.400px] leading-none text-[#363840]">My Workspace</span>
                <div className="ml-[11px] flex flex-col gap-[2px]"><i className="size-1 rounded-full bg-[#707276]" /><i className="size-1 rounded-full bg-[#707276]" /><i className="size-1 rounded-full bg-[#707276]" /></div>
                <span className="ml-auto border-b border-dashed border-[#aaa] text-[12.600px] leading-[18px] text-[#a9abae]">Updated 1 hour ago</span>
                <div className="ml-[17px] mr-[92px] flex h-[34px] w-[65px] items-center rounded border border-[#f0f0f0] bg-[#f9f9f9]">
                  <span className="flex h-full w-[31px] items-center justify-center border-r border-[#f0f0f0]"><svg width="15" height="15" viewBox="0 0 15 15" fill="none" stroke="#cfcfcf" strokeWidth="1.800"><path d="M1.500 1v5h5M2 5.500Q4 2 8 2.200a5.500 5.500 0 1 1-2 10.600" /></svg></span>
                  <span className="flex flex-1 items-center justify-center"><svg width="15" height="15" viewBox="0 0 15 15" fill="none" stroke="#cfcfcf" strokeWidth="1.800"><path d="M13.500 1v5h-5M13 5.500Q11 2 7 2.200a5.500 5.500 0 1 0 2 10.600" /></svg></span>
                </div>
              </footer>
              <div className="absolute bottom-[20px] right-[20px] flex size-[54px] items-center justify-center rounded-full bg-[#e6e6e6] shadow-[0_1px_6px_rgba(0,0,0,.12)]">
                <svg width="28" height="28" viewBox="0 0 28 28"><ellipse cx="14" cy="12.500" rx="13.500" ry="12" fill="#757575" /><path d="M18 22q3 3.500 6.500 5q1-.5 0-1.500q-1.500-2-1-5.500z" fill="#757575" /></svg>
              </div>
            </div>
            <div className="flex w-[15px] shrink-0 flex-col items-center justify-between bg-[#f1f1f1] py-[6px]">
              <svg width="8" height="4"><path d="M0 4h8L4 0z" fill="#505050" /></svg>
              <div className="mb-[170px] mt-[85px] w-[11px] flex-1 bg-[#c1c1c1]" />
              <svg width="8" height="4"><path d="M0 0h8L4 4z" fill="#505050" /></svg>
            </div>
          </div>
        </div>
      </div>
    </div>
  );
}
